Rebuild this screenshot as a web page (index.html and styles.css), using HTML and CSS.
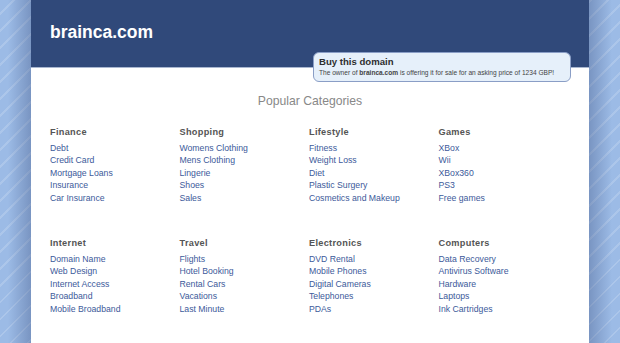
FILE: index.html
```
<html>
    <head>
        <link rel="stylesheet" href="styles.css">
    </head>
    <body>
        <div id="page">
            <div id="header">
                <h1 id="domain">brainca.com</h1>
                <div id="sale">
                    <b>Buy this domain</b>
                    <p>The owner of <strong>brainca.com</strong> is offering it for sale for an asking price of 1234 GBP!</p>
                </div>
            </div>
            <div id="content">
                <h2>Popular Categories</h2>
                <div class="cats">
                    <div class="cat">
                        <h3>Finance</h3>
                        <a href="#">Debt</a>
                        <a href="#">Credit Card</a>
                        <a href="#">Mortgage Loans</a>
                        <a href="#">Insurance</a>
                        <a href="#">Car Insurance</a>
                    </div>
                    <div class="cat">
                        <h3>Shopping</h3>
                        <a href="#">Womens Clothing</a>
                        <a href="#">Mens Clothing</a>
                        <a href="#">Lingerie</a>
                        <a href="#">Shoes</a>
                        <a href="#">Sales</a>
                    </div>
                    <div class="cat">
                        <h3>Lifestyle</h3>
                        <a href="#">Fitness</a>
                        <a href="#">Weight Loss</a>
                        <a href="#">Diet</a>
                        <a href="#">Plastic Surgery</a>
                        <a href="#">Cosmetics and Makeup</a>
                    </div>
                    <div class="cat">
                        <h3>Games</h3>
                        <a href="#">XBox</a>
                        <a href="#">Wii</a>
                        <a href="#">XBox360</a>
                        <a href="#">PS3</a>
                        <a href="#">Free games</a>
                    </div>
                    <div class="cat">
                        <h3>Internet</h3>
                        <a href="#">Domain Name</a>
                        <a href="#">Web Design</a>
                        <a href="#">Internet Access</a>
                        <a href="#">Broadband</a>
                        <a href="#">Mobile Broadband</a>
                    </div>
                    <div class="cat">
                        <h3>Travel</h3>
                        <a href="#">Flights</a>
                        <a href="#">Hotel Booking</a>
                        <a href="#">Rental Cars</a>
                        <a href="#">Vacations</a>
                        <a href="#">Last Minute</a>
                    </div>
                    <div class="cat">
                        <h3>Electronics</h3>
                        <a href="#">DVD Rental</a>
                        <a href="#">Mobile Phones</a>
                        <a href="#">Digital Cameras</a>
                        <a href="#">Telephones</a>
                        <a href="#">PDAs</a>
                    </div>
                    <div class="cat">
                        <h3>Computers</h3>
                        <a href="#">Data Recovery</a>
                        <a href="#">Antivirus Software</a>
                        <a href="#">Hardware</a>
                        <a href="#">Laptops</a>
                        <a href="#">Ink Cartridges</a>
                    </div>
                </div>
            </div>
        </div>
    </body>
</html>
```

FILE: styles.css
```
html, body {
    height: 100%;
}

body {
    margin: 0;
    font-family: "Liberation Sans", Arial, sans-serif;
    background-color: #9cbbe6;
    background-image:
        linear-gradient(90deg, rgba(40,60,110,0) 0, rgba(40,60,110,0) 8px, rgba(40,60,110,0.3) 31px, rgba(40,60,110,0) 31px, rgba(40,60,110,0) 589px, rgba(40,60,110,0.3) 589px, rgba(40,60,110,0) 612px),
        repeating-linear-gradient(-45deg, rgba(255,255,255,0) 0, rgba(255,255,255,0) 10px, rgba(255,255,255,0.16) 10px, rgba(255,255,255,0.16) 12px);
    overflow: hidden;
}

#page {
    width: 558px;
    height: 100%;
    margin: 0 auto;
    background: #fff;
}

#header {
    position: relative;
    height: 67px;
    background: #30497a;
    border-bottom: 1px solid #a9b7d0;
    padding-left: 19px;
}

#domain {
    margin: 0;
    padding-top: 22px;
    font-size: 17.5px;
    color: #fff;
    font-weight: bold;
}

/* sale notice hangs over the header edge */
#sale {
    position: absolute;
    left: 282px;
    top: 52px;
    width: 245px;
    height: 22px;
    padding: 3px 6px 3px 5px;
    background: #e6f0fa;
    border: 1px solid #8a9ec6;
    border-radius: 6px;
    color: #333;
}

#sale b {
    display: block;
    font-size: 9.6px;
    line-height: 12px;
    color: #2e2e2e;
}

#sale p {
    margin: 0;
    font-size: 6.6px;
    line-height: 10px;
    white-space: nowrap;
    color: #444;
}

#content {
    padding: 26px 0 0 19px;
}

#content h2 {
    margin: 0 0 18px -19px;
    text-align: center;
    font-size: 12.2px;
    line-height: 14px;
    font-weight: normal;
    color: #888;
}

.cats {
    display: grid;
    grid-template-columns: repeat(4, 129.5px);
    row-gap: 33px;
}

.cat h3 {
    margin: 0 0 3px;
    font-size: 9.2px;
    line-height: 13px;
    letter-spacing: 0.3px;
    color: #555;
}

.cat a {
    display: block;
    font-size: 8.7px;
    line-height: 12.4px;
    color: #3c5a9a;
    text-decoration: none;
}
```
